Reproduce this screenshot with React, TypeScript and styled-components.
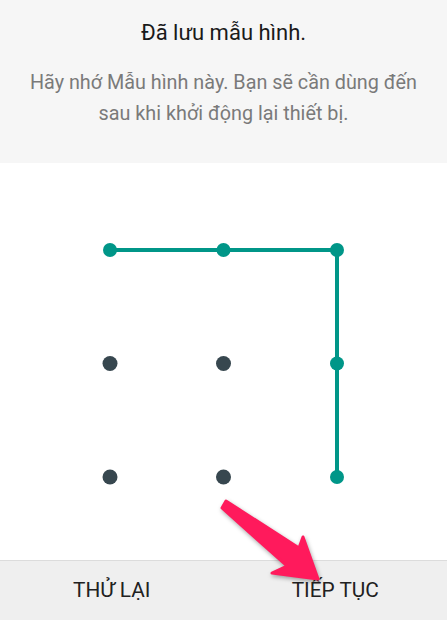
import styled, { createGlobalStyle } from "styled-components"

const GlobalStyle = createGlobalStyle`
  html, body {
    margin: 0;
    padding: 0;
    background: #fff;
  }
  body {
    font-family: Roboto, "Noto Sans", Arial, sans-serif;
  }
`

const Screen = styled.div`
  position: relative;
  width: 447px;
  height: 620px;
  display: flex;
  flex-direction: column;
  overflow: hidden;
`

const Header = styled.div`
  height: 163px;
  background: #f6f6f6;
  display: flex;
  flex-direction: column;
  align-items: center;
  box-sizing: border-box;
  padding-top: 18px;
  text-align: center;
`

const Title = styled.h1`
  margin: 0;
  font-size: 22px;
  font-weight: 400;
  line-height: 30px;
  color: #1a1a1a;
`

const Message = styled.p`
  margin: 19px 0 0;
  font-size: 19.8px;
  line-height: 31px;
  color: #7a7a7a;
`

const PatternArea = styled.div`
  flex: 1;
  background: #fff;
  display: flex;
  align-items: center;
  justify-content: center;
  padding-top: 3px;
`

const ButtonBar = styled.div`
  height: 60px;
  box-sizing: border-box;
  border-top: 1px solid #dcdcdc;
  background: #efefef;
  display: flex;
`

const BarButton = styled.button`
  flex: 1;
  border: none;
  background: transparent;
  font-family: inherit;
  font-size: 20.8px;
  color: #212121;
  padding: 0 0 2px;
`

const Pointer = styled.svg`
  position: absolute;
  left: 210px;
  top: 490px;
  filter: drop-shadow(1px 2px 2px rgba(0, 0, 0, 0.35));
`

const TEAL = "#009688"
const DARK = "#37474f"
const pts = [12, 125.5, 239]
const selected = ["0,0", "1,0", "2,0", "2,1", "2,2"]

const Pattern = () => (
  <svg width="251" height="251" viewBox="0 0 251 251">
    <polyline
      points={`${pts[0]},${pts[0]} ${pts[2]},${pts[0]} ${pts[2]},${pts[2]}`}
      fill="none"
      stroke={TEAL}
      strokeWidth="4"
    />
    {pts.map((y, r) =>
      pts.map((x, c) => (
        <circle
          key={`${c},${r}`}
          cx={x}
          cy={y}
          r={selected.includes(`${c},${r}`) ? 7 : 7.5}
          fill={selected.includes(`${c},${r}`) ? TEAL : DARK}
        />
      ))
    )}
  </svg>
)

export default function App() {
  return (
    <Screen>
      <GlobalStyle />
      <Header>
        <Title>Đã lưu mẫu hình.</Title>
        <Message>
          Hãy nhớ Mẫu hình này. Bạn sẽ cần dùng đến
          <br />
          sau khi khởi động lại thiết bị.
        </Message>
      </Header>
      <PatternArea>
        <Pattern />
      </PatternArea>
      <ButtonBar>
        <BarButton>THỬ LẠI</BarButton>
        <BarButton>TIẾP TỤC</BarButton>
      </ButtonBar>
      <Pointer width="120" height="100" viewBox="210 490 120 100">
        <polygon
          points="226,501 299,548 303,537 318,579 272,573 287,566 222,508"
          fill="#ff1a5c"
          stroke="#ff1a5c"
          strokeWidth="3"
          strokeLinejoin="round"
        />
      </Pointer>
    </Screen>
  )
}
